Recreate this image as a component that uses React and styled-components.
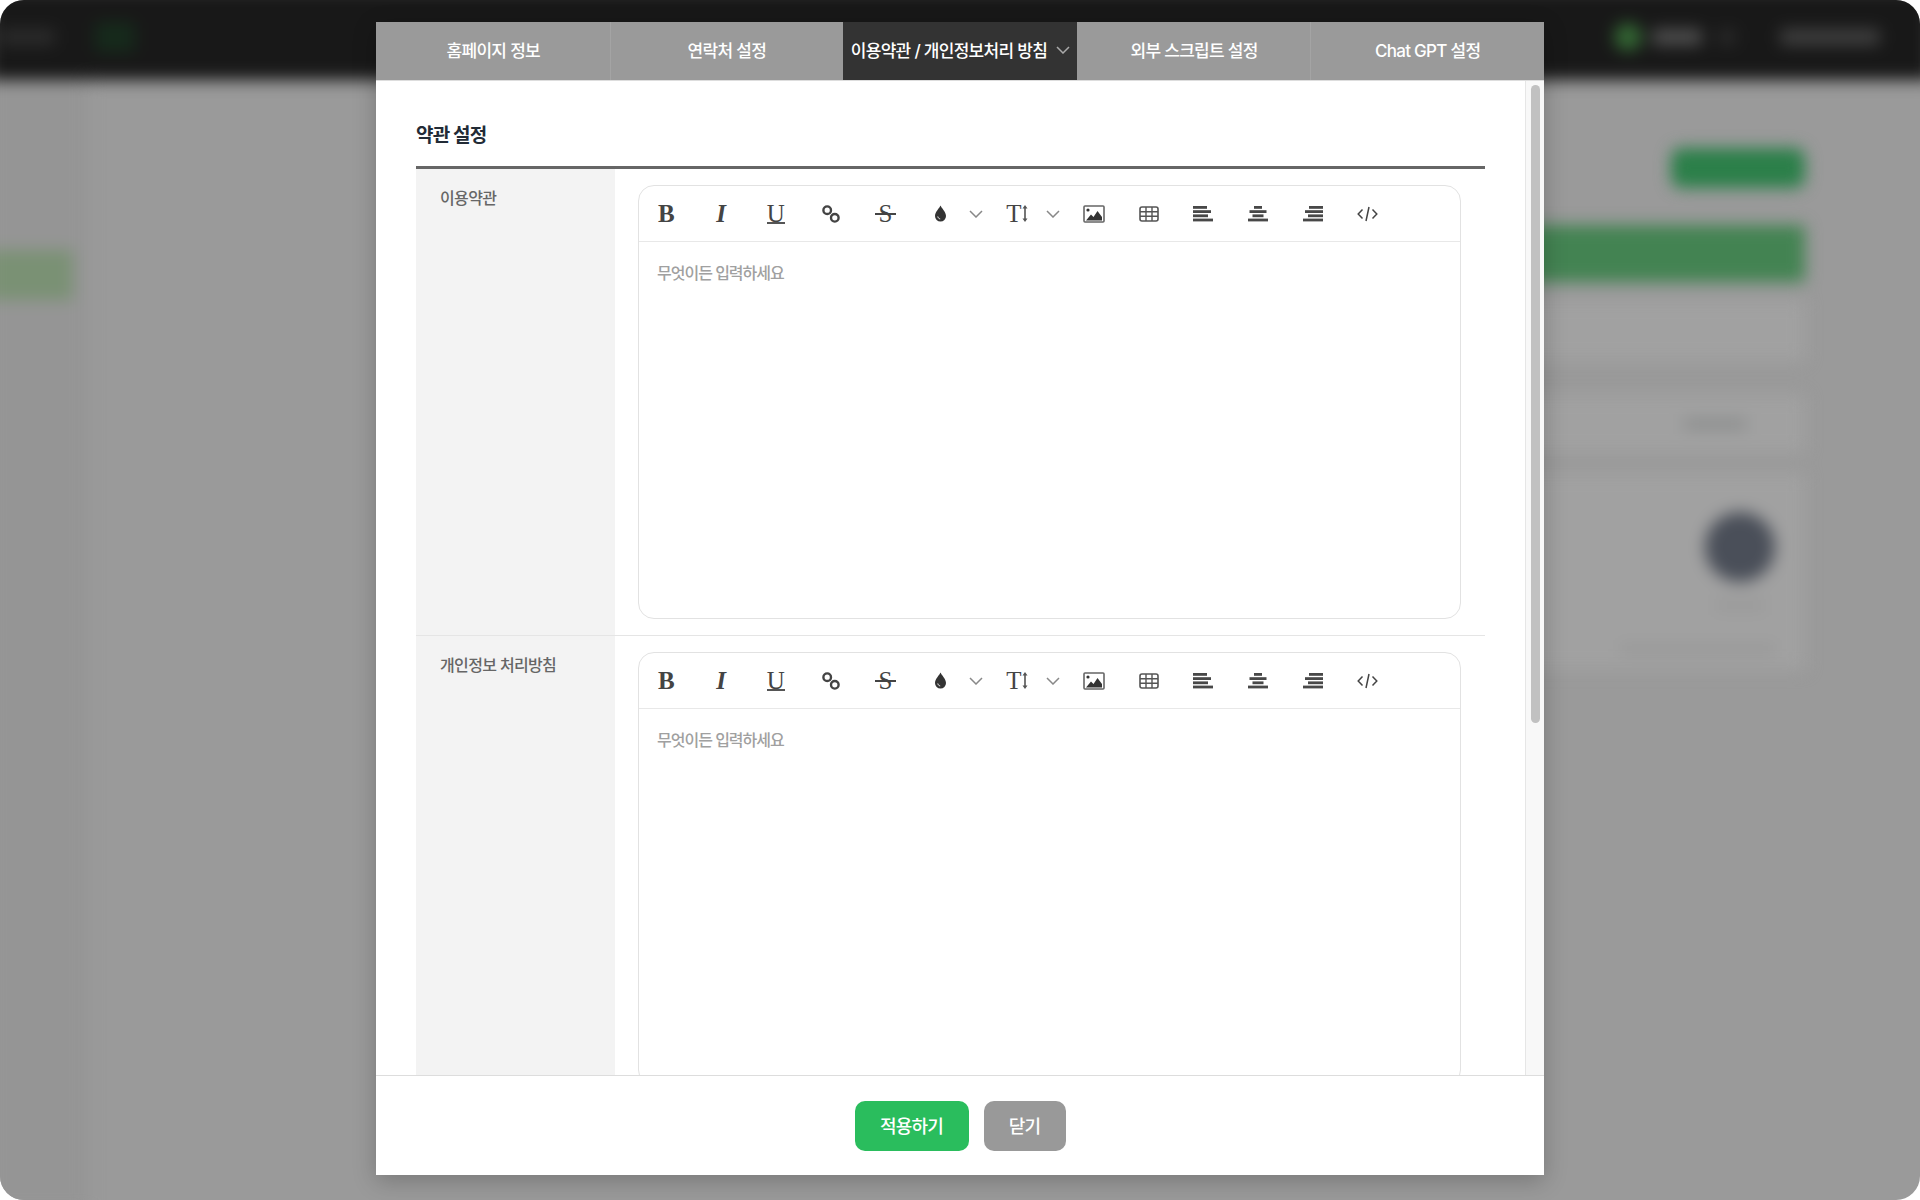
import React from 'react'
import styled, { createGlobalStyle } from 'styled-components'

const GlobalStyle = createGlobalStyle`
  html, body { margin: 0; padding: 0; background: #fff; }
  body { font-family: "Inter", "Noto Sans CJK KR", "Noto Sans", sans-serif; }
  * { box-sizing: border-box; }
`

const Frame = styled.div`
  position: relative;
  width: 1920px;
  height: 1200px;
  border-radius: 24px;
  overflow: hidden;
  background: #9a9a9a;
`

/* the page behind the modal, out of focus */
const Backdrop = styled.div`
  position: absolute;
  inset: -12px;
  display: flex;
  flex-direction: column;
  filter: blur(8px);
`
const TopBar = styled.div`
  height: 92px;
  flex: none;
  padding: 12px 12px 6px;
  background: #181818;
  display: flex;
  align-items: center;
`
const Blob = styled.div`
  flex: none;
  width: ${p => p.$w}px;
  height: ${p => p.$h || 16}px;
  margin-left: ${p => p.$ml || 0}px;
  border-radius: ${p => (p.$round ? '50%' : '4px')};
  background: ${p => p.$c};
`
const Spacer = styled.div`
  flex: 1;
`
const Under = styled.div`
  flex: 1;
  display: flex;
`
const Side = styled.div`
  width: 100px;
  flex: none;
  background: #959595;
  padding-top: 170px;
`
const SideItem = styled.div`
  width: 85px;
  height: 50px;
  background: #7a9174;
`
const Main = styled.div`
  flex: 1;
  display: flex;
  flex-direction: column;
  align-items: flex-end;
  padding: 68px 127px 0 0;
`
const GhostButton = styled.div`
  width: 134px;
  height: 40px;
  border-radius: 10px;
  background: #2b7f49;
`
const GhostBar = styled.div`
  width: 800px;
  height: 57px;
  margin-top: 37px;
  border-radius: 4px;
  background: #438352;
`
const GhostPanel = styled.div`
  width: 800px;
  height: ${p => p.$h}px;
  margin-top: ${p => p.$mt}px;
  padding-top: ${p => p.$pt || 0}px;
  background: #a1a1a1;
`
const GhostAvatar = styled.div`
  width: 70px;
  height: 70px;
  margin-left: 700px;
  border-radius: 50%;
  background: #4a4f59;
`
const GhostLine = styled.div`
  width: ${p => p.$w}px;
  height: 10px;
  margin: ${p => p.$m};
  background: ${p => p.$c};
`

const Overlay = styled.div`
  position: absolute;
  inset: 0;
  display: flex;
  justify-content: center;
  align-items: flex-start;
  padding-top: 22px;
`
const Modal = styled.div`
  width: 1168px;
  height: 1153px;
  background: #fff;
  display: flex;
  flex-direction: column;
  box-shadow: 0 6px 22px rgba(0, 0, 0, 0.22);
`
const Tabs = styled.div`
  height: 59px;
  flex: none;
  display: grid;
  grid-template-columns: repeat(5, 1fr);
  border-bottom: 1px solid #ddd;
  background: #9a9a9a;
`
const Tab = styled.div`
  display: flex;
  align-items: center;
  justify-content: center;
  gap: 9px;
  padding-bottom: 3px;
  font-size: 17px;
  font-weight: 500;
  letter-spacing: -0.7px;
  white-space: nowrap;
  color: #fff;
  background: ${p => (p.$active ? '#333' : 'transparent')};
  border-left: 1px solid ${p => (p.$plain || p.$active ? 'transparent' : '#a4a4a4')};
`
const Body = styled.div`
  flex: 1;
  min-height: 0;
  display: flex;
`
const Content = styled.div`
  flex: 1;
  min-width: 0;
  overflow: hidden;
  padding: 41px 40px 0;
`
const Gutter = styled.div`
  width: 19px;
  flex: none;
  padding: 4px 4px 0 5px;
  background: #f8f8f8;
  border-left: 1px solid #e6e6e6;
`
const Thumb = styled.div`
  height: 638px;
  border-radius: 5px;
  background: #c1c1c1;
`
const Heading = styled.h2`
  margin: 0;
  height: 44px;
  font-size: 19px;
  line-height: 28px;
  font-weight: 700;
  letter-spacing: -0.8px;
  color: #222b36;
`
const Table = styled.div`
  border-top: 3px solid #666;
`
const Row = styled.div`
  display: flex;
  border-bottom: 1px solid #e5e5e5;
`
const Label = styled.div`
  width: 199px;
  flex: none;
  padding: 17px 24px;
  background: #f3f3f3;
  font-size: 16px;
  line-height: 24px;
  font-weight: 500;
  letter-spacing: -0.65px;
  color: #666;
`
const Cell = styled.div`
  flex: 1;
  padding: 16px 24px 16px 23px;
`
const Editor = styled.div`
  border: 1px solid #e2e2e2;
  border-radius: 16px;
  height: 434px;
`
const Toolbar = styled.div`
  height: 56px;
  display: flex;
  align-items: center;
  border-bottom: 1px solid #e8e8e8;
`
const IconButton = styled.div`
  position: relative;
  width: ${p => p.$w || 54.75}px;
  height: 100%;
  flex: none;
  padding-left: ${p => p.$pl || 0}px;
  display: flex;
  align-items: center;
  justify-content: center;
`
const Caret = styled.div`
  width: 17px;
  flex: none;
  margin-right: ${p => p.$mr || 0}px;
  display: flex;
  justify-content: center;
`
const Letter = styled.span`
  font-family: "Liberation Serif", serif;
  font-size: 25px;
  line-height: 24px;
  font-weight: ${p => (p.$bold ? 700 : 400)};
  font-style: ${p => (p.$italic ? 'italic' : 'normal')};
  color: #444;
`
const UnderLetter = styled(Letter)`
  border-bottom: 2px solid #555;
  line-height: 19px;
  height: 20px;
  margin-top: 1px;
  font-weight: 500;
`
const StrikeLine = styled.i`
  position: absolute;
  left: 17px;
  top: 27px;
  width: 21px;
  height: 2px;
  background: #444;
`
const Placeholder = styled.div`
  padding: 19px 18px;
  font-size: 16px;
  line-height: 24px;
  font-weight: 500;
  letter-spacing: -1px;
  color: #a0a0a0;
`
const Footer = styled.div`
  height: 100px;
  flex: none;
  border-top: 1px solid #ddd;
  display: flex;
  justify-content: center;
  align-items: flex-start;
  gap: 15px;
  padding-top: 25px;
`
const ActionButton = styled.button`
  width: ${p => p.$w}px;
  height: 50px;
  padding: 0 0 3px;
  border: 0;
  border-radius: 10px;
  background: ${p => p.$bg};
  color: #fff;
  font-family: inherit;
  font-size: 18px;
  font-weight: 500;
  letter-spacing: -0.8px;
`

const Chevron = ({ color = '#888' }) => (
  <svg width="14" height="8" viewBox="0 0 14 8" fill="none">
    <path d="M1 1l6 6 6-6" stroke={color} strokeWidth="1.5" />
  </svg>
)

const LinkIcon = () => (
  <svg width="20" height="20" viewBox="0 0 20 20" fill="none" stroke="#444" strokeWidth="2.4">
    <circle cx="6.200" cy="6.200" r="3.800" />
    <circle cx="13.800" cy="13.800" r="3.800" />
  </svg>
)

const DropIcon = () => (
  <svg width="13" height="17" viewBox="0 0 13 17">
    <path d="M6.500 0.500C5.500 3 1 7 1 11a5.500 5.500 0 0 0 11 0C12 7 7.500 3 6.500 0.500z" fill="#333" />
    <path d="M3.800 11.500c0.300 1.500 1.200 2.200 2.400 2.400" fill="none" stroke="#fff" strokeWidth="1" />
  </svg>
)

const SizeIcon = () => (
  <>
    <Letter>T</Letter>
    <svg width="6" height="17" viewBox="0 0 6 17" fill="#555">
      <path d="M3 0L5.500 3.500H3.800V13.500H5.500L3 17 0.500 13.500H2.200V3.500H0.500z" />
    </svg>
  </>
)

const ImageIcon = () => (
  <svg width="22" height="18" viewBox="0 0 22 18">
    <rect x="1" y="1" width="20" height="16" rx="1" fill="#fff" stroke="#666" strokeWidth="1.600" />
    <circle cx="5" cy="5" r="1.600" fill="#333" />
    <path d="M3 15.500l5-6 2.500 2.500 4-6 4.500 6v3.500z" fill="#333" />
  </svg>
)

const TableIcon = () => (
  <svg width="20" height="16" viewBox="0 0 20 16" fill="none" stroke="#555" strokeWidth="1.400">
    <rect x="1" y="1" width="18" height="14" rx="2" strokeWidth="1.600" />
    <path d="M1 5.700h18M1 10.300h18M7 1v14M13 1v14" />
  </svg>
)

const AlignIcon = ({ bars }) => (
  <svg width="20" height="17" viewBox="0 0 20 17" fill="#484848">
    {bars.map(([x, w], i) => (
      <rect key={i} x={x} y={1 + i * 4.200} width={w} height="2.800" />
    ))}
  </svg>
)

const CodeIcon = () => (
  <svg width="21" height="16" viewBox="0 0 21 16" fill="none" stroke="#444" strokeWidth="1.500">
    <path d="M5.500 3.500L1.200 8l4.300 4.500M15.500 3.500L19.800 8l-4.300 4.500M12 1L9 15" />
  </svg>
)

const EditorBox = () => (
  <Editor>
    <Toolbar>
      <IconButton><Letter $bold>B</Letter></IconButton>
      <IconButton><Letter $italic $bold>I</Letter></IconButton>
      <IconButton><UnderLetter>U</UnderLetter></IconButton>
      <IconButton><LinkIcon /></IconButton>
      <IconButton><Letter>S</Letter><StrikeLine /></IconButton>
      <IconButton><DropIcon /></IconButton>
      <Caret><Chevron /></Caret>
      <IconButton $w={60} $pl={5}><SizeIcon /></IconButton>
      <Caret $mr={5}><Chevron /></Caret>
      <IconButton><ImageIcon /></IconButton>
      <IconButton><TableIcon /></IconButton>
      <IconButton><AlignIcon bars={[[0, 14], [0, 18], [0, 15], [0, 20]]} /></IconButton>
      <IconButton><AlignIcon bars={[[6, 8], [1.500, 17], [4.500, 11], [0, 20]]} /></IconButton>
      <IconButton><AlignIcon bars={[[6, 14], [2, 18], [5, 15], [0, 20]]} /></IconButton>
      <IconButton><CodeIcon /></IconButton>
    </Toolbar>
    <Placeholder>무엇이든 입력하세요</Placeholder>
  </Editor>
)

export default function App() {
  return (
    <Frame>
      <GlobalStyle />
      <Backdrop aria-hidden>
        <TopBar>
          <Blob $w={55} $c="#2c2c2c" />
          <Blob $w={40} $h={30} $ml={40} $c="#162a1b" />
          <Spacer />
          <Blob $w={28} $h={28} $round $c="#336633" />
          <Blob $w={50} $ml={10} $c="#505050" />
          <Blob $w={18} $ml={16} $c="#2a2a2a" />
          <Blob $w={100} $ml={44} $c="#404040" />
          <Blob $w={40} $c="#181818" />
        </TopBar>
        <Under>
          <Side><SideItem /></Side>
          <Main>
            <GhostButton />
            <GhostBar />
            <GhostPanel $h={61} $mt={18} />
            <GhostPanel $h={58} $mt={34} $pt={24}>
              <GhostLine $w={62} $c="#8a8c8c" $m="0 0 0 679px" />
            </GhostPanel>
            <GhostPanel $h={197} $mt={20} $pt={39}>
              <GhostAvatar />
              <GhostLine $w={50} $c="#999" $m="18px 0 0 710px" />
              <GhostLine $w={155} $c="#989898" $m="35px 0 0 615px" />
            </GhostPanel>
          </Main>
        </Under>
      </Backdrop>

      <Overlay>
        <Modal>
          <Tabs>
            <Tab $plain>홈페이지 정보</Tab>
            <Tab>연락처 설정</Tab>
            <Tab $active>이용약관 / 개인정보처리 방침 <Chevron color="#aaa" /></Tab>
            <Tab $plain>외부 스크립트 설정</Tab>
            <Tab>Chat GPT 설정</Tab>
          </Tabs>
          <Body>
            <Content>
              <Heading>약관 설정</Heading>
              <Table>
                <Row>
                  <Label>이용약관</Label>
                  <Cell><EditorBox /></Cell>
                </Row>
                <Row>
                  <Label>개인정보 처리방침</Label>
                  <Cell><EditorBox /></Cell>
                </Row>
              </Table>
            </Content>
            <Gutter><Thumb /></Gutter>
          </Body>
          <Footer>
            <ActionButton $w={114} $bg="#2abd5d">적용하기</ActionButton>
            <ActionButton $w={82} $bg="#999">닫기</ActionButton>
          </Footer>
        </Modal>
      </Overlay>
    </Frame>
  )
}
